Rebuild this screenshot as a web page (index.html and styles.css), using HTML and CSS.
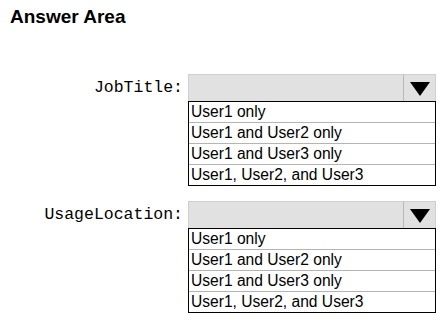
FILE: index.html
```html
<!DOCTYPE html>
<html lang="en">
  <head>
    <meta charset="UTF-8" />
    <title>Answer Area</title>
    <link rel="stylesheet" href="styles.css">
  </head>
  <body>
    <h1 class="title">Answer Area</h1>

    <div class="answers">
      <!-- JobTitle dropdown -->
      <div class="answer-row">
        <span class="field-label">JobTitle:</span>
        <div class="dropdown">
          <div class="dropdown-bar">
            <span class="dropdown-value"></span>
            <span class="dropdown-arrow">
              <svg width="20" height="14" viewBox="0 0 20 14"><polygon points="0,0 20,0 10,14" fill="#000"/></svg>
            </span>
          </div>
          <ul class="dropdown-list">
            <li>User1 only</li>
            <li>User1 and User2 only</li>
            <li>User1 and User3 only</li>
            <li>User1, User2, and User3</li>
          </ul>
        </div>
      </div>

      <!-- UsageLocation dropdown -->
      <div class="answer-row">
        <span class="field-label">UsageLocation:</span>
        <div class="dropdown">
          <div class="dropdown-bar">
            <span class="dropdown-value"></span>
            <span class="dropdown-arrow">
              <svg width="20" height="14" viewBox="0 0 20 14"><polygon points="0,0 20,0 10,14" fill="#000"/></svg>
            </span>
          </div>
          <ul class="dropdown-list">
            <li>User1 only</li>
            <li>User1 and User2 only</li>
            <li>User1 and User3 only</li>
            <li>User1, User2, and User3</li>
          </ul>
        </div>
      </div>
    </div>
  </body>
</html>
```

FILE: styles.css
```css
* {
  margin: 0;
  padding: 0;
  box-sizing: border-box;
}

body {
  font-family: 'Liberation Sans', Arial, sans-serif;
  background: #ffffff;
  color: #000;
}

.title {
  font-size: 19px;
  font-weight: bold;
  line-height: 22px;
  margin: 6px 0 0 10px;
}

.answers {
  display: flex;
  flex-direction: column;
  gap: 15px;
  margin-top: 46px;
}

.answer-row {
  display: flex;
  align-items: flex-start;
  gap: 5px;
}

.field-label {
  width: 183px;
  text-align: right;
  font-family: 'Liberation Mono', 'Courier New', monospace;
  font-size: 16.5px;
  line-height: 27px;
}

.dropdown {
  width: 248px;
}

.dropdown-bar {
  display: flex;
  height: 27px;
  background: #e1e1e1;
  border: 1px solid #cfcfcf;
  border-bottom: none;
}

.dropdown-value {
  flex-grow: 1;
}

.dropdown-arrow {
  width: 32px;
  display: flex;
  align-items: center;
  justify-content: center;
  border-left: 1px solid #b8b8b8;
  padding-top: 1px;
}

.dropdown-list {
  list-style: none;
  border: 1px solid #000;
}

.dropdown-list li {
  font-size: 15.6px;
  line-height: 20px;
  height: 21px;
  padding-left: 2px;
  border-bottom: 1px solid #b4b4b4;
}

.dropdown-list li:last-child {
  height: 20px;
  border-bottom: none;
}
```
